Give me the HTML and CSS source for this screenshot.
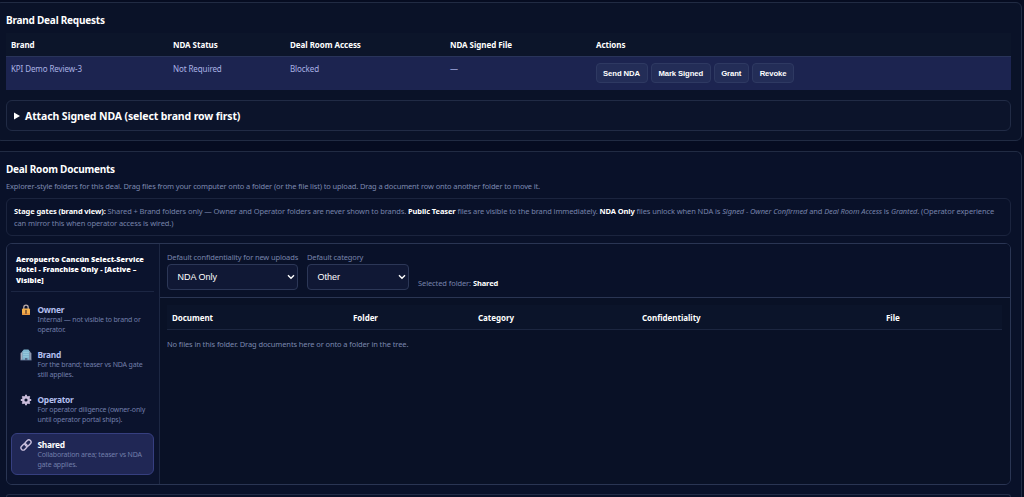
FILE: index.html
```
<!DOCTYPE html>
<html lang="en">
  <head>
    <meta charset="UTF-8" />
    <meta name="viewport" content="width=device-width, initial-scale=1.0" />
    <title>Deal Room</title>
    <link rel="stylesheet" href="styles.css">
  </head>
  <body>
    <section class="panel requests">
      <h2>Brand Deal Requests</h2>
      <table class="requests-table">
        <colgroup>
          <col class="col-brand" />
          <col class="col-status" />
          <col class="col-access" />
          <col class="col-file" />
          <col />
        </colgroup>
        <thead>
          <tr>
            <th>Brand</th>
            <th>NDA Status</th>
            <th>Deal Room Access</th>
            <th>NDA Signed File</th>
            <th>Actions</th>
          </tr>
        </thead>
        <tbody>
          <tr class="selected">
            <td>KPI Demo Review-3</td>
            <td>Not Required</td>
            <td>Blocked</td>
            <td>—</td>
            <td>
              <div class="row-actions">
                <button type="button" class="btn btn-send">Send NDA</button>
                <button type="button" class="btn btn-mark">Mark Signed</button>
                <button type="button" class="btn btn-grant">Grant</button>
                <button type="button" class="btn btn-revoke">Revoke</button>
              </div>
            </td>
          </tr>
        </tbody>
      </table>
      <details class="attach">
        <summary>
          <svg class="marker" viewBox="0 0 6 8"><path d="M0 0.5 L6 4 L0 7.5 Z" /></svg>
          <span>Attach Signed NDA (select brand row first)</span>
        </summary>
      </details>
    </section>

    <section class="panel documents">
      <h2>Deal Room Documents</h2>
      <p class="hint">Explorer-style folders for this deal. Drag files from your computer onto a folder (or the file list) to upload. Drag a document row onto another folder to move it.</p>
      <div class="gates">
        <strong>Stage gates (brand view):</strong> Shared + Brand folders only — Owner and Operator folders are never shown to brands. <strong>Public Teaser</strong> files are visible to the brand immediately. <strong>NDA Only</strong> files unlock when NDA is <em>Signed - Owner Confirmed</em> and <em>Deal Room Access</em> is <em>Granted</em>. (Operator experience<br />can mirror this when operator access is wired.)
      </div>

      <div class="explorer">
        <aside class="tree">
          <h3>Aeropuerto Cancún Select-Service<br />Hotel - Franchise Only - [Active –<br />Visible]</h3>
          <div class="folder">
            <svg class="icon" viewBox="0 0 12 12">
              <path d="M3.8 5.5V3.4a2.2 2.2 0 0 1 4.4 0v2.1" fill="none" stroke="#b9a9a8" stroke-width="1.3" />
              <rect x="2" y="4.6" width="8" height="6.4" rx="1" fill="#f5b04c" />
              <rect x="2" y="9" width="8" height="2" rx="1" fill="#e99843" />
              <path d="M6 6.4v2.8" stroke="#68432d" stroke-width="1.4" stroke-linecap="round" />
            </svg>
            <div>
              <strong>Owner</strong>
              <small>Internal — not visible to brand or<br />operator.</small>
            </div>
          </div>
          <div class="folder">
            <svg class="icon" viewBox="0 0 12 12">
              <path d="M.6 4l2.2-1.4V11H.6z" fill="#a9afc0" />
              <path d="M2.4 2.2l1.4-1.6h4.6l1.4 1.6V11H2.4z" fill="#7fb6cf" />
              <path d="M9.4 2.6l2 1.4v7h-2z" fill="#9098ae" />
              <path d="M3.2 3.4h5.6M3.2 5.6h5.6M3.2 7.8h5.6" stroke="#a3d3e3" stroke-width=".7" />
              <path d="M5 9h2.4v2H5zM.4 10.8h11.2v.6H.4z" fill="#586987" />
            </svg>
            <div>
              <strong>Brand</strong>
              <small>For the brand; teaser vs NDA gate<br />still applies.</small>
            </div>
          </div>
          <div class="folder">
            <svg class="icon" viewBox="0 0 12 12">
              <g stroke="#cbbddb" fill="none">
                <circle cx="6" cy="6" r="2.8" stroke-width="2.4" />
                <path d="M6 .8v2M6 9.2v2M.8 6h2M9.2 6h2M2.3 2.3l1.4 1.4M8.3 8.3l1.4 1.4M9.7 2.3L8.3 3.7M3.7 8.3L2.3 9.7" stroke-width="1.9" />
              </g>
            </svg>
            <div>
              <strong>Operator</strong>
              <small>For operator diligence (owner-only<br />until operator portal ships).</small>
            </div>
          </div>
          <div class="folder active">
            <svg class="icon" viewBox="0 0 12 12">
              <g transform="rotate(-45 6 6)" fill="none" stroke="#c9bfdc" stroke-width="1.4">
                <rect x="-.2" y="3.8" width="6.8" height="4.4" rx="2.2" />
                <rect x="5.4" y="3.8" width="6.8" height="4.4" rx="2.2" />
              </g>
            </svg>
            <div>
              <strong>Shared</strong>
              <small>Collaboration area; teaser vs NDA<br />gate applies.</small>
            </div>
          </div>
        </aside>

        <div class="files">
          <div class="toolbar">
            <label class="field conf">
              <span>Default confidentiality for new uploads</span>
              <span class="select">NDA Only
                <svg viewBox="0 0 8 6"><path d="M1 1.2l3 3 3-3" /></svg>
              </span>
            </label>
            <label class="field cat">
              <span>Default category</span>
              <span class="select">Other
                <svg viewBox="0 0 8 6"><path d="M1 1.2l3 3 3-3" /></svg>
              </span>
            </label>
            <div class="current">Selected folder: <strong>Shared</strong></div>
          </div>
          <div class="file-list">
            <div class="file-head">
              <span>Document</span>
              <span>Folder</span>
              <span>Category</span>
              <span>Confidentiality</span>
              <span>File</span>
            </div>
            <p class="empty">No files in this folder. Drag documents here or onto a folder in the tree.</p>
          </div>
        </div>
      </div>
      <div class="next-box"></div>
    </section>
  </body>
</html>
```
FILE: styles.css
```
* {
  box-sizing: border-box;
}

body {
  margin: 0;
  padding-top: 2px;
  height: 497px;
  overflow: hidden;
  background: #060c21;
  color: #fff;
  font-family: "Noto Sans", "Open Sans", sans-serif;
  font-size: 8px;
  white-space: nowrap;
}

.panel {
  margin: 0 2px 10px -5px;
  padding: 10px;
  border: 1px solid #212b43;
  border-radius: 6px;
  background: #0a1228;
}

.requests {
  height: 139px;
}

.documents {
  height: 346px;
  margin-bottom: 0;
  padding-bottom: 0;
  border-bottom: none;
  border-radius: 6px 6px 0 0;
  background: #091129;
}

h2 {
  margin: 0;
  font-size: 10px;
  line-height: 14px;
  font-weight: 700;
  letter-spacing: -0.22px;
}

.requests-table {
  width: 100%;
  margin-top: 6px;
  border-collapse: separate;
  border-spacing: 0;
  table-layout: fixed;
}

.col-brand {
  width: 162px;
}

.col-status {
  width: 117px;
}

.col-access {
  width: 160px;
}

.col-file {
  width: 146px;
}

.requests-table th {
  height: 24px;
  padding: 0 5px;
  text-align: left;
  background: #0c152a;
  border-bottom: 1px solid #29345a;
  letter-spacing: -0.05px;
}

.requests-table td {
  height: 33px;
  padding: 5px 5px 0;
  vertical-align: top;
  line-height: 13px;
  color: #aab2e4;
  background: #1c2450;
  letter-spacing: -0.1px;
}

.row-actions {
  display: flex;
  gap: 3.5px;
  margin: 1px 0 0 -0.5px;
}

.btn {
  height: 20px;
  padding: 0;
  border: 1px solid #2e3962;
  border-radius: 4px;
  background: #232d57;
  color: #fff;
  font: 700 7.7px "Liberation Sans", Arial, sans-serif;
  letter-spacing: -0.1px;
}

.btn-send {
  width: 52px;
}

.btn-mark {
  width: 59.5px;
}

.btn-grant {
  width: 34.5px;
}

.btn-revoke {
  width: 42px;
}

.attach {
  height: 31px;
  margin-top: 10px;
  padding: 0 7px;
  border: 1px solid #212b45;
  border-radius: 6px;
  background: #0c142b;
}

.attach summary {
  display: flex;
  align-items: center;
  gap: 5px;
  height: 30px;
  font-size: 10.5px;
  font-weight: 700;
  letter-spacing: -0.12px;
}

.marker {
  width: 6px;
  height: 8px;
  fill: #fff;
}

.hint {
  margin: 4px 0 6px;
  line-height: 12px;
  font-size: 7.5px;
  letter-spacing: -0.135px;
  color: #7d89b0;
}

.gates {
  height: 38px;
  padding: 7px;
  border: 1px solid #1b243e;
  border-radius: 6px;
  font-size: 7.5px;
  line-height: 11.5px;
  letter-spacing: -0.1px;
  color: #7783aa;
}

.gates strong,
.current strong {
  color: #fff;
}

.explorer {
  display: flex;
  height: 242px;
  margin-top: 7px;
  border: 1px solid #2a3553;
  border-radius: 6px;
  background: #091129;
  overflow: hidden;
}

.tree {
  width: 153px;
  padding: 10px 5px 0 4px;
  border-right: 1px solid #1d2743;
  background: #0b132d;
}

h3 {
  margin: 0 0 6px;
  padding: 0 5px 6px;
  border-bottom: 1px solid #1c2643;
  font-size: 7.3px;
  line-height: 10.4px;
  font-weight: 900;
  letter-spacing: 0.01px;
}

.folder {
  display: flex;
  gap: 5.5px;
  height: 42px;
  margin-bottom: 3px;
  padding: 5px 8px;
  border: 1px solid transparent;
  border-radius: 6px;
}

.folder strong,
.folder small {
  display: block;
}

.folder strong {
  font-size: 8.4px;
  line-height: 11px;
  letter-spacing: -0.27px;
  color: #b3bfef;
}

.folder small {
  font-size: 7px;
  line-height: 9.3px;
  letter-spacing: -0.18px;
  color: #717eaa;
}

.folder.active {
  background: #202755;
  border-color: #363f80;
}

.folder.active strong {
  color: #fff;
}

.icon {
  flex: none;
  width: 12px;
  height: 12px;
}

.files {
  flex: 1;
  background: #091126;
}

.toolbar {
  display: flex;
  height: 54px;
  padding: 7px;
  border-bottom: 1px solid #2a3553;
  background: #091129;
}

.field {
  display: flex;
  flex-direction: column;
  font-size: 7.5px;
  line-height: 13px;
  letter-spacing: -0.14px;
  color: #7783aa;
}

.conf {
  width: 131px;
  margin-right: 9px;
}

.cat {
  width: 102px;
  margin-right: 9px;
}

.select {
  display: flex;
  align-items: center;
  justify-content: space-between;
  height: 26px;
  padding: 0 2px 0 9.5px;
  border: 1px solid #2c3757;
  border-radius: 4px;
  background: #101835;
  color: #fff;
  font: 9px "Liberation Sans", Arial, sans-serif;
  letter-spacing: 0;
}

.select svg {
  width: 8px;
  height: 6px;
  fill: none;
  stroke: #fff;
  stroke-width: 1.4;
}

.current {
  align-self: flex-end;
  line-height: 13px;
  font-size: 7.5px;
  letter-spacing: -0.1px;
  color: #7783aa;
}

.file-list {
  padding: 7px 8px 0 7px;
}

.file-head {
  display: grid;
  grid-template-columns: 181px 125px 164px 244px 1fr;
  height: 25px;
  padding-left: 5px;
  align-items: center;
  background: #0b142a;
  border-bottom: 1px solid #1c2640;
  font-weight: 700;
  letter-spacing: -0.05px;
}

.empty {
  margin: 8px 0 0;
  font-size: 7.5px;
  line-height: 13px;
  letter-spacing: -0.11px;
  color: #7b88ae;
}

.next-box {
  height: 3px;
  margin-top: 9px;
  border: 1px solid #212b45;
  border-bottom: none;
  border-radius: 6px 6px 0 0;
}
```
